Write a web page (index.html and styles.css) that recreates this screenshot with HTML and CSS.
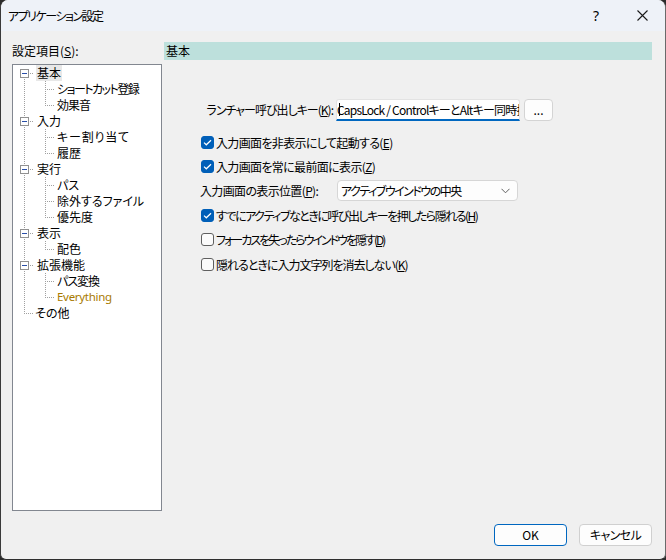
FILE: index.html
```html
<!DOCTYPE html>
<html lang="ja">
<head>
<meta charset="utf-8">
<title>アプリケーション設定</title>
<link rel="stylesheet" href="styles.css">
</head>
<body>
<div class="window">
  <div class="titlebar">
    <div class="title ls3">アプリケーション設定</div>
    <div class="tbtn help">?</div>
    <div class="tbtn close"><svg width="11" height="11" viewBox="0 0 11 11"><path d="M0.5 0.5L10.5 10.5M10.5 0.5L0.5 10.5" stroke="#1a1a1a" stroke-width="1.1" fill="none"/></svg></div>
  </div>
  <div class="main">
    <div class="left">
      <div class="label">設定項目(<u>S</u>):</div>
      <div class="tree">
        <div class="row"><span class="c first"><span class="exp"></span></span><span class="t sel">基本</span></div>
        <div class="row"><span class="c pipe"></span><span class="c2 tee"></span><span class="t ls3">ショートカット登録</span></div>
        <div class="row"><span class="c pipe"></span><span class="c2 ell"></span><span class="t ls2">効果音</span></div>
        <div class="row"><span class="c tee"><span class="exp"></span></span><span class="t">入力</span></div>
        <div class="row"><span class="c pipe"></span><span class="c2 tee"></span><span class="t lsp">キー割り当て</span></div>
        <div class="row"><span class="c pipe"></span><span class="c2 ell"></span><span class="t">履歴</span></div>
        <div class="row"><span class="c tee"><span class="exp"></span></span><span class="t">実行</span></div>
        <div class="row"><span class="c pipe"></span><span class="c2 tee"></span><span class="t">パス</span></div>
        <div class="row"><span class="c pipe"></span><span class="c2 tee"></span><span class="t">除外するファイル</span></div>
        <div class="row"><span class="c pipe"></span><span class="c2 ell"></span><span class="t">優先度</span></div>
        <div class="row"><span class="c tee"><span class="exp"></span></span><span class="t">表示</span></div>
        <div class="row"><span class="c pipe"></span><span class="c2 ell"></span><span class="t">配色</span></div>
        <div class="row"><span class="c tee"><span class="exp"></span></span><span class="t">拡張機能</span></div>
        <div class="row"><span class="c pipe"></span><span class="c2 tee"></span><span class="t ls2">パス変換</span></div>
        <div class="row"><span class="c pipe"></span><span class="c2 ell"></span><span class="t ext">Everything</span></div>
        <div class="row"><span class="c ell"></span><span class="t leaf">その他</span></div>
      </div>
    </div>
    <div class="right">
      <div class="banner">基本</div>
      <div class="keyrow">
        <span class="keylabel"><span class="ls2">ランチャー呼び出しキー(<u>K</u>):</span></span>
        <div class="field"><span class="caret"></span><span class="ftext">CapsLock / ControlキーとAltキー同時押し</span></div>
        <div class="dots">...</div>
      </div>
      <div class="opts">
        <div class="opt"><span class="cb on"><svg width="9" height="7" viewBox="0 0 9 7"><path d="M1 3.6L3.3 5.8L8 1.2" stroke="#fff" stroke-width="1.2" fill="none"/></svg></span><span class="ol ls1">入力画面を非表示にして起動する(<u>E</u>)</span></div>
        <div class="opt"><span class="cb on"><svg width="9" height="7" viewBox="0 0 9 7"><path d="M1 3.6L3.3 5.8L8 1.2" stroke="#fff" stroke-width="1.2" fill="none"/></svg></span><span class="ol ls1">入力画面を常に最前面に表示(<u>Z</u>)</span></div>
        <div class="opt combo-row">
          <span class="combolabel ls1">入力画面の表示位置(<u>P</u>):</span>
          <div class="combo"><span class="ls3">アクティブウインドウの中央</span><svg width="9" height="6" viewBox="0 0 9 6"><path d="M0.5 0.8L4.5 4.8L8.5 0.8" stroke="#606060" stroke-width="1" fill="none"/></svg></div>
        </div>
        <div class="opt"><span class="cb on"><svg width="9" height="7" viewBox="0 0 9 7"><path d="M1 3.6L3.3 5.8L8 1.2" stroke="#fff" stroke-width="1.2" fill="none"/></svg></span><span class="ol ls3">すでにアクティブなときに呼び出しキーを押したら隠れる(<u>H</u>)</span></div>
        <div class="opt tall"><span class="cb"></span><span class="ol ls4">フォーカスを失ったらウインドウを隠す(<u>D</u>)</span></div>
        <div class="opt tall"><span class="cb"></span><span class="ol ls2">隠れるときに入力文字列を消去しない(<u>K</u>)</span></div>
      </div>
    </div>
  </div>
  <div class="footer">
    <div class="btn default">OK</div>
    <div class="btn ls1">キャンセル</div>
  </div>
</div>
</body>
</html>
```

FILE: styles.css
```css
* { box-sizing: border-box; }
html, body { margin: 0; padding: 0; background: #2b2b2b; }
body {
  font-family: "Noto Sans CJK JP", "Noto Sans", sans-serif;
  font-size: 12px;
  font-feature-settings: "palt";
  color: #000;
}
u { text-decoration: underline; text-underline-offset: 1px; }

.ls1 { letter-spacing: -0.65px; }
.ls2 { letter-spacing: -1px; }
.ls3 { letter-spacing: -1.5px; }
.ls4 { letter-spacing: -2px; }
.lsp { letter-spacing: 0.8px; }

.window {
  width: 666px;
  height: 560px;
  background: #f0f0f0;
  border-left: 1px solid #3a3a3a;
  border-right: 1px solid #6a6a6a;
  border-bottom: 1px solid #2e2e2e;
  border-radius: 8px 8px 6px 6px;
  overflow: hidden;
  display: flex;
  flex-direction: column;
}

.titlebar {
  height: 31px;
  background: #eef2f8;
  display: flex;
  align-items: center;
  flex-shrink: 0;
}
.title {
  flex: 1;
  padding-left: 7px;
  font-size: 12px;
  line-height: 31px;
}
.tbtn {
  width: 46px;
  height: 31px;
  display: flex;
  align-items: center;
  justify-content: center;
}
.help { font-family: "Noto Sans", sans-serif; font-size: 14px; }

.main {
  display: flex;
  height: 480px;
  padding: 11px 0 0 11px;
  flex-shrink: 0;
}
.left { width: 150px; }
.label { height: 18px; line-height: 18px; }
.tree {
  margin-top: 4px;
  height: 447px;
  background: #fff;
  border: 1px solid #828790;
}
.row {
  display: flex;
  height: 16px;
  line-height: 16px;
  white-space: nowrap;
}
.c, .c2 { display: block; flex-shrink: 0; height: 16px; }
.c { width: 21px; }
.c2 { width: 20px; }
.pipe {
  background: repeating-linear-gradient(to bottom, #a0a0a0 0 1px, transparent 1px 2px) 11px 0 / 1px 16px no-repeat;
}
.tee {
  background:
    repeating-linear-gradient(to bottom, #a0a0a0 0 1px, transparent 1px 2px) 11px 0 / 1px 16px no-repeat,
    repeating-linear-gradient(to right, #a0a0a0 0 1px, transparent 1px 2px) 11px 8px / 9px 1px no-repeat;
}
.ell {
  background:
    repeating-linear-gradient(to bottom, #a0a0a0 0 1px, transparent 1px 2px) 11px 0 / 1px 9px no-repeat,
    repeating-linear-gradient(to right, #a0a0a0 0 1px, transparent 1px 2px) 11px 8px / 9px 1px no-repeat;
}
.first {
  background:
    repeating-linear-gradient(to bottom, #a0a0a0 0 1px, transparent 1px 2px) 11px 8px / 1px 8px no-repeat,
    repeating-linear-gradient(to right, #a0a0a0 0 1px, transparent 1px 2px) 11px 8px / 9px 1px no-repeat;
}
.exp {
  display: block;
  width: 9px;
  height: 9px;
  margin: 4px 0 0 7px;
  border: 1px solid #919191;
  background: linear-gradient(#2a4fa8, #2a4fa8) center / 5px 1px no-repeat, #fff;
}
.t { margin-left: 2px; padding: 0 1px; }
.t.leaf { margin-left: 0; }
.sel { background: #e8e8e8; }
.ext { color: #a87a00; font-family: "Noto Sans", sans-serif; font-size: 11.5px; letter-spacing: -0.3px; }

.right { margin-left: 2px; width: 488px; }
.banner {
  height: 18px;
  line-height: 18px;
  background: #bde0dc;
  padding-left: 2px;
}
.keyrow {
  display: flex;
  align-items: center;
  height: 23px;
  margin: 38px 0 0 42px;
}
.keylabel {
  width: 127px;
  flex-shrink: 0;
  display: flex;
  justify-content: flex-end;
  white-space: nowrap;
}
.field {
  margin-left: 3px;
  width: 184px;
  flex-shrink: 0;
  height: 22px;
  background: #fff;
  border: 1px solid #e3e3e3;
  border-bottom: 2px solid #0067c0;
  border-radius: 3px 3px 0 0;
  display: flex;
  align-items: center;
  overflow: hidden;
  white-space: nowrap;
}
.caret {
  display: block;
  flex-shrink: 0;
  width: 1px;
  height: 13px;
  background: #000;
  margin-left: 2px;
}
.ftext {
  display: block;
  flex: 1;
  min-width: 0;
  overflow: hidden;
  margin-left: -3px;
  letter-spacing: -0.8px;
}
.dots {
  margin-left: 4px;
  width: 29px;
  flex-shrink: 0;
  height: 22px;
  background: #fdfdfd;
  border: 1px solid #d4d4d4;
  border-radius: 4px;
  text-align: center;
  line-height: 20px;
}

.opts { margin-top: 9px; }
.opt {
  display: flex;
  align-items: center;
  height: 24px;
  padding-left: 37px;
  white-space: nowrap;
}
.opt.tall, .combo-row { height: 25px; }
.cb {
  width: 13px;
  height: 13px;
  border-radius: 3px;
  border: 1px solid #5f5f5f;
  background: #fbfbfb;
  display: flex;
  align-items: center;
  justify-content: center;
  flex-shrink: 0;
}
.cb.on { background: #005fb8; border-color: #005fb8; }
.ol { margin-left: 2px; }

.combo-row { padding-left: 36px; }
.combolabel { width: 137px; flex-shrink: 0; }
.combo {
  width: 181px;
  height: 21px;
  background: #fdfdfd;
  border: 1px solid #d6d6d6;
  border-radius: 4px;
  display: flex;
  align-items: center;
  justify-content: space-between;
  padding: 0 7px 0 3px;
}

.footer {
  display: flex;
  justify-content: flex-end;
  gap: 12px;
  padding: 13px 13px 0 0;
}
.btn {
  width: 73px;
  height: 22px;
  background: #fdfdfd;
  border: 1px solid #d0d0d0;
  border-radius: 4px;
  text-align: center;
  line-height: 20px;
}
.btn.default { border: 1px solid #0067c0; box-shadow: inset 0 0 0 1px #fdfdfd; }
```
